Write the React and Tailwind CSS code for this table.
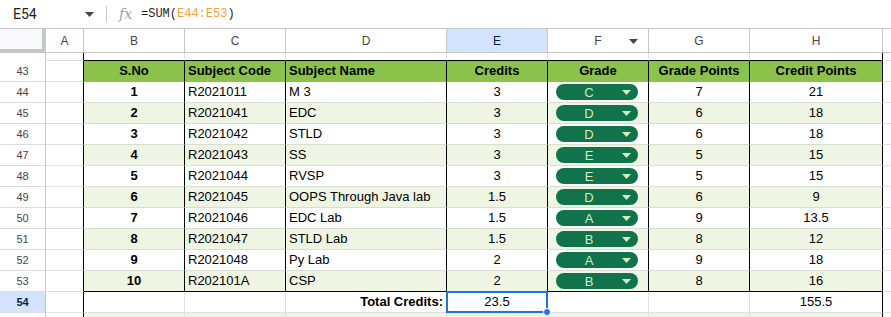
const rows = [
  [1, 'R2021011', 'M 3', '3', 'C', 7, '21'],
  [2, 'R2021041', 'EDC', '3', 'D', 6, '18'],
  [3, 'R2021042', 'STLD', '3', 'D', 6, '18'],
  [4, 'R2021043', 'SS', '3', 'E', 5, '15'],
  [5, 'R2021044', 'RVSP', '3', 'E', 5, '15'],
  [6, 'R2021045', 'OOPS Through Java lab', '1.5', 'D', 6, '9'],
  [7, 'R2021046', 'EDC Lab', '1.5', 'A', 9, '13.5'],
  [8, 'R2021047', 'STLD Lab', '1.5', 'B', 8, '12'],
  [9, 'R2021048', 'Py Lab', '2', 'A', 9, '18'],
  [10, 'R202101A', 'CSP', '2', 'B', 8, '16'],
];

const grid = 'grid grid-cols-[46px_38px_101px_101px_161px_101px_101px_101px_133px_1fr]';

function Caret({ color = '#444746' }) {
  return (
    <svg width="9" height="5" viewBox="0 0 9 5">
      <path d="M0 0h9L4.5 5z" fill={color} />
    </svg>
  );
}

function Chip({ letter }) {
  return (
    <div className="ml-[8px] flex h-[16px] w-[82px] items-center rounded-full bg-[#11734b] text-[#d4edbc]">
      <span className="w-[66px] text-center leading-none">{letter}</span>
      <Caret color="#d4edbc" />
    </div>
  );
}

function RowHead({ n, selected }) {
  return (
    <div
      className={`flex items-center justify-center border-r border-b border-r-[#c4c7c5] border-b-[#dadce0] text-[11px] ${
        selected ? 'bg-[#d3e3fd] font-bold text-[#041e49]' : 'bg-white font-normal text-[#444746]'
      }`}
    >
      {n}
    </div>
  );
}

export default function App() {
  return (
    <div className="h-[317px] w-[891px] overflow-hidden bg-white font-['Liberation_Sans',Arial,sans-serif] text-[13px] text-black">
      {/* formula bar */}
      <div className="flex h-[29px] items-center border-b border-[#c4c7c5]">
        <div className="flex w-[106px] items-center pl-[13px] pr-[12px] font-['Roboto',sans-serif] text-[14px] text-[#1f1f1f]">
          <span className="flex-1">E54</span>
          <Caret />
        </div>
        <div className="h-[16px] w-px bg-[#c4c7c5]" />
        <span className="ml-[12px] w-[22px] font-['DejaVu_Serif',serif] text-[14px] italic text-[#9aa0a6]">fx</span>
        <span className="font-['Liberation_Mono',monospace] text-[12px] text-[#1f1f1f]">
          =SUM(<span className="text-[#f4a142]">E44:E53</span>)
        </span>
      </div>

      {/* column headers */}
      <div className={`${grid} h-[24px] text-[12px] text-[#444746]`}>
        <div className="border-r-4 border-b-4 border-[#c4c7c5] bg-[#f8f9fa]" />
        {['A', 'B', 'C', 'D', 'E', 'F', 'G', 'H', ''].map((c, i) => (
          <div
            key={i}
            className={`relative flex items-center justify-center border-b border-[#c4c7c5] ${
              c ? 'border-r' : ''
            } ${c === 'E' ? 'bg-[#d3e3fd] text-[#041e49]' : ''}`}
          >
            {c}
            {c === 'F' && (
              <span className="absolute right-[10px] top-[10px] flex">
                <Caret />
              </span>
            )}
          </div>
        ))}
      </div>

      {/* row 42, partially hidden */}
      <div className={`${grid} h-[8px]`}>
        <div className="border-r border-[#c4c7c5]" />
        <div className="border-r border-b border-r-black border-b-[#e1e1e1]" />
        {[0, 1, 2, 3, 4, 5].map((i) => (
          <div key={i} className="border-r border-b border-r-[#e1e1e1] border-b-black" />
        ))}
        <div className="border-r border-b border-black" />
        <div className="border-b border-[#e1e1e1]" />
      </div>

      {/* row 43 header */}
      <div className={`${grid} h-[21px]`}>
        <RowHead n={43} />
        <div className="border-r border-b border-r-black border-b-[#e1e1e1]" />
        {['S.No', 'Subject Code', 'Subject Name', 'Credits', 'Grade', 'Grade Points', 'Credit Points'].map((h, i) => (
          <div
            key={h}
            className={`flex items-center border-r border-b border-r-black border-b-[#8bc34a] bg-[#8bc34a] font-bold ${
              i === 1 || i === 2 ? 'pl-[3px]' : 'justify-center'
            }`}
          >
            {h}
          </div>
        ))}
        <div className="border-b border-[#e1e1e1]" />
      </div>

      {/* data rows */}
      {rows.map((r, idx) => {
        const bg = idx % 2 ? 'bg-[#eef5e3]' : 'bg-white';
        const bb = idx === rows.length - 1 ? 'border-b-black' : 'border-b-[#d9dfd0]';
        const cell = `flex items-center border-r border-b border-r-black ${bb} ${bg}`;
        return (
          <div key={r[0]} className={`${grid} h-[21px]`}>
            <RowHead n={44 + idx} />
            <div className="border-r border-b border-r-black border-b-[#e1e1e1]" />
            <div className={`${cell} justify-center font-bold`}>{r[0]}</div>
            <div className={`${cell} pl-[3px]`}>{r[1]}</div>
            <div className={`${cell} pl-[3px]`}>{r[2]}</div>
            <div className={`${cell} justify-center`}>{r[3]}</div>
            <div className={cell}>
              <Chip letter={r[4]} />
            </div>
            <div className={`${cell} justify-center`}>{r[5]}</div>
            <div className={`${cell} justify-center`}>{r[6]}</div>
            <div className="border-b border-[#e1e1e1]" />
          </div>
        );
      })}

      {/* row 54 totals */}
      <div className={`${grid} h-[21px]`}>
        <RowHead n={54} selected />
        <div className="border-r border-b border-r-black border-b-[#e1e1e1]" />
        <div className="border-r border-b border-[#e1e1e1]" />
        <div className="border-r border-b border-[#e1e1e1]" />
        <div className="flex items-center justify-end border-r border-b border-[#e1e1e1] pr-[3px] font-bold">
          Total Credits:
        </div>
        <div className="relative flex items-center justify-center border-r border-b border-[#e1e1e1]">
          23.5
          <div className="absolute -left-px -top-px h-[22px] w-[102px] border-2 border-[#1a73e8]" />
          <div className="absolute -bottom-[4px] -right-[4px] h-[8px] w-[8px] rounded-full border border-white bg-[#1a73e8]" />
        </div>
        <div className="border-r border-b border-[#e1e1e1]" />
        <div className="border-r border-b border-[#e1e1e1]" />
        <div className="flex items-center justify-center border-r border-b border-r-black border-b-[#e1e1e1]">155.5</div>
        <div className="border-b border-[#e1e1e1]" />
      </div>

      {/* row 55, partially visible */}
      <div className={`${grid} h-[4px]`}>
        <div className="border-r border-[#c4c7c5]" />
        <div className="border-r border-black" />
        {[0, 1, 2, 3, 4, 5].map((i) => (
          <div key={i} className="border-r border-[#e1e1e1] bg-[#eef5e3]" />
        ))}
        <div className="border-r border-black bg-[#eef5e3]" />
        <div />
      </div>
    </div>
  );
}
